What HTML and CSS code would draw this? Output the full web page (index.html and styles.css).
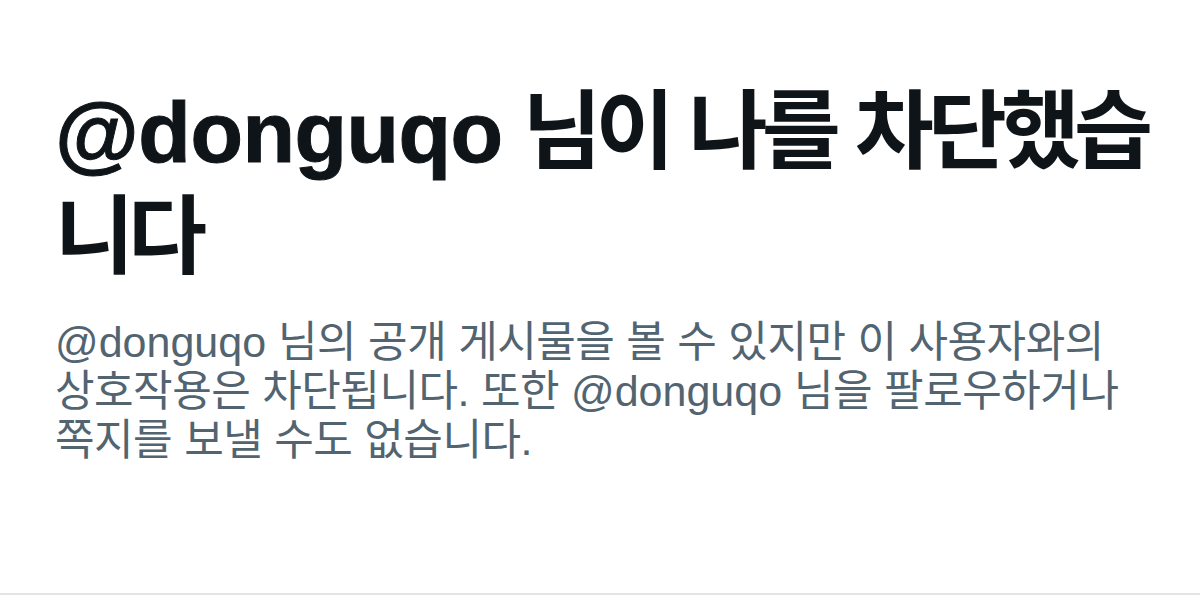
FILE: index.html
```html
<!DOCTYPE html>
<html lang="ko">
<head>
    <meta charset="UTF-8">
    <meta name="viewport" content="width=device-width, initial-scale=1.0">
    <title>차단됨</title>
    <link rel="stylesheet" href="styles.css">
</head>
<body>

    <div class="blocked-page">
        <div class="blocked-notice">
            <h1 class="notice-title"><span class="handle">@donguqo</span> 님이 나를 차단했습니다</h1>
            <p class="notice-text"><span class="handle">@donguqo</span> 님의 공개 게시물을 볼 수 있지만 이 사용자와의 상호작용은 차단됩니다. 또한 <span class="handle">@donguqo</span> 님을 팔로우하거나 쪽지를 보낼 수도 없습니다.</p>
        </div>
        <div class="page-divider"></div>
    </div>

</body>
</html>
```

FILE: styles.css
```css
* {
    margin: 0;
    padding: 0;
    box-sizing: border-box;
}

body {
    font-family: 'Liberation Sans', 'Noto Sans CJK KR', sans-serif;
    background: #fff;
    color: #0f1419;
    width: 1200px;
    height: 604px;
    overflow: hidden;
}

.blocked-page {
    display: flex;
    flex-direction: column;
    height: 100%;
}

.blocked-notice {
    flex: 1;
    padding: 80px 40px 0 55px;
}

.notice-title {
    font-size: 86px;
    line-height: 105px;
    font-weight: 700;
    letter-spacing: -6px;
    word-spacing: 2px;
    margin-bottom: 28px;
}

.notice-title .handle {
    letter-spacing: -0.5px;
    -webkit-text-stroke: 1px #0f1419;
}

.notice-text {
    font-size: 43px;
    line-height: 49px;
    color: #536471;
    letter-spacing: -0.5px;
    word-spacing: 0.5px;
    word-break: keep-all;
}

.notice-text .handle {
    letter-spacing: 0;
}

.page-divider {
    height: 2px;
    background-color: #e4e4e4;
    margin-bottom: 9px;
}
```
